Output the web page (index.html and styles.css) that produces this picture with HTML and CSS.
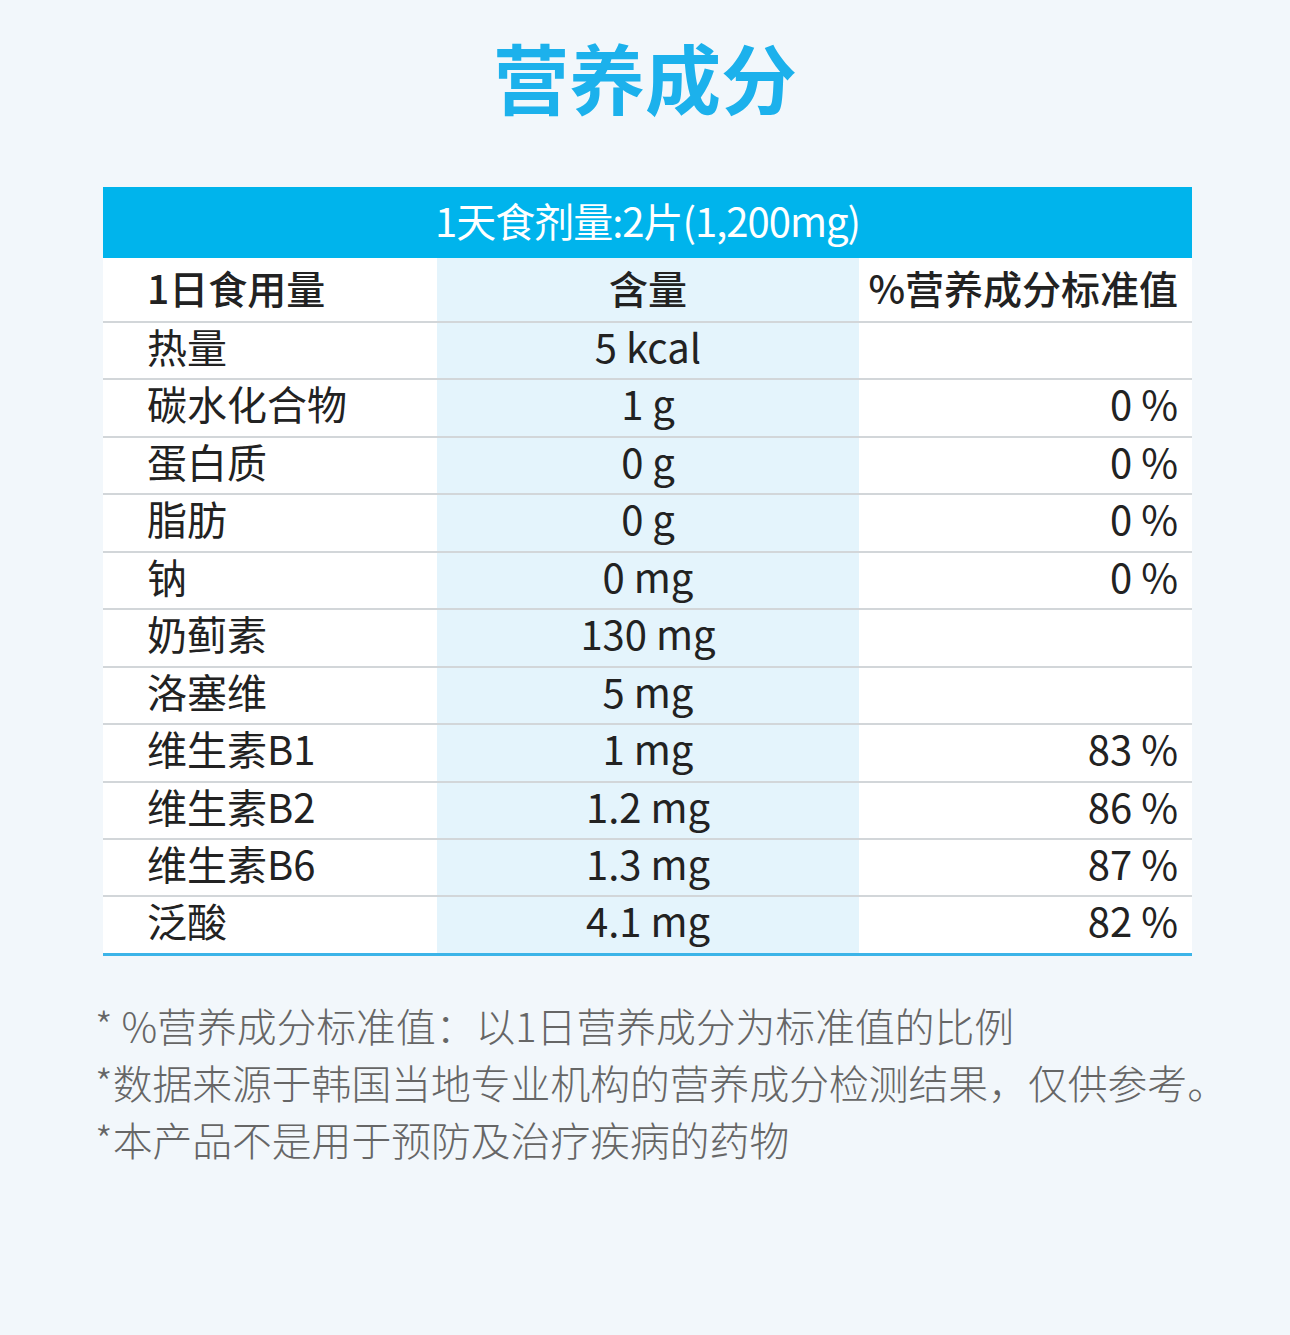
FILE: index.html
```html
<!DOCTYPE html>
<html lang="zh-CN">
<head>
<meta charset="utf-8">
<title>营养成分</title>
<link rel="stylesheet" href="styles.css">
</head>
<body>
<div class="page">
  <h1 class="title">营养成分</h1>
  <div class="table">
    <div class="band">1天食剂量:2片(1,200mg)</div>
    <div class="row head">
      <div class="c1">1日食用量</div>
      <div class="c2">含量</div>
      <div class="c3">%营养成分标准值</div>
    </div>
    <div class="row"><div class="c1">热量</div><div class="c2">5 kcal</div><div class="c3"></div></div>
    <div class="row"><div class="c1">碳水化合物</div><div class="c2">1 g</div><div class="c3">0 %</div></div>
    <div class="row"><div class="c1">蛋白质</div><div class="c2">0 g</div><div class="c3">0 %</div></div>
    <div class="row"><div class="c1">脂肪</div><div class="c2">0 g</div><div class="c3">0 %</div></div>
    <div class="row"><div class="c1">钠</div><div class="c2">0 mg</div><div class="c3">0 %</div></div>
    <div class="row"><div class="c1">奶蓟素</div><div class="c2">130 mg</div><div class="c3"></div></div>
    <div class="row"><div class="c1">洛塞维</div><div class="c2">5 mg</div><div class="c3"></div></div>
    <div class="row"><div class="c1">维生素B1</div><div class="c2">1 mg</div><div class="c3">83 %</div></div>
    <div class="row"><div class="c1">维生素B2</div><div class="c2">1.2 mg</div><div class="c3">86 %</div></div>
    <div class="row"><div class="c1">维生素B6</div><div class="c2">1.3 mg</div><div class="c3">87 %</div></div>
    <div class="row last"><div class="c1">泛酸</div><div class="c2">4.1 mg</div><div class="c3">82 %</div></div>
  </div>
  <div class="notes">
    <p>* %营养成分标准值：以1日营养成分为标准值的比例</p>
    <p>*数据来源于韩国当地专业机构的营养成分检测结果，仅供参考。</p>
    <p>*本产品不是用于预防及治疗疾病的药物</p>
  </div>
</div>
</body>
</html>
```
FILE: styles.css
```css
html, body {
  margin: 0;
  padding: 0;
  background: #f2f7fb;
}
body {
  font-family: "Noto Sans CJK SC", "Noto Sans", sans-serif;
  color: #222;
}
.page {
  width: 1290px;
  height: 1335px;
  overflow: hidden;
}
.title {
  margin: 0;
  padding-top: 30px;
  height: 187px;
  box-sizing: border-box;
  text-align: center;
  font-size: 76px;
  line-height: 92px;
  font-weight: 700;
  color: #1cb1ec;
}
.table {
  margin-left: 103px;
  width: 1089px;
  border-bottom: 3px solid #3cb4e8;
}
.band {
  height: 71px;
  background: #00b4ec;
  color: #fff;
  font-size: 40px;
  line-height: 66px;
  text-align: center;
  letter-spacing: -1px;
}
.row {
  display: grid;
  grid-template-columns: 334px 422px 333px;
  height: 57.45px;
  box-sizing: border-box;
  border-top: 2px solid #d2d6d9;
  font-size: 40px;
  line-height: 46px;
}
.row.head {
  height: 63px;
  border-top: none;
  font-weight: 500;
  font-size: 39px;
  line-height: 58px;
}
.c1 {
  background: #fff;
  padding-left: 44px;
}
.c2 {
  background: #e4f4fc;
  text-align: center;
}
.c3 {
  background: #fff;
  text-align: right;
  padding-right: 14px;
}
.notes {
  margin-top: 40px;
  padding-left: 95px;
  color: #666;
  font-size: 39.8px;
  font-weight: 300;
}
.notes p {
  margin: 0;
  line-height: 57px;
  white-space: nowrap;
}
```
